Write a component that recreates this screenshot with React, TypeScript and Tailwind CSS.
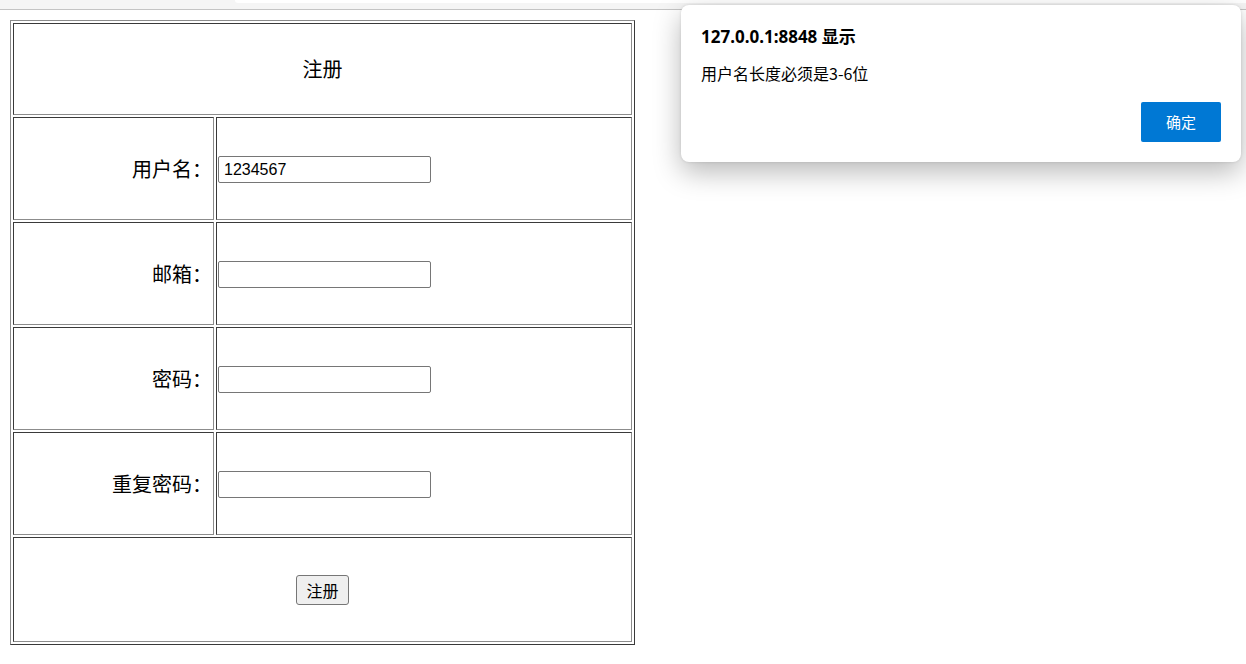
import React from "react";

const cjk = "font-['Noto_Sans_CJK_SC','Noto_Sans',sans-serif]";

function Cell({ className = "", children }: { className?: string; children?: React.ReactNode }) {
  return (
    <div
      className={
        "border border-solid border-t-[#3a3a3a] border-l-[#3a3a3a] border-b-[#8c8c8c] border-r-[#8c8c8c] p-[1px] " +
        className
      }
    >
      {children}
    </div>
  );
}

function FieldRow({ label, value }: { label: string; value?: string }) {
  return (
    <div className="flex h-[103px] gap-[2px]">
      <Cell className="flex w-[201px] items-center justify-end">
        <span className={`${cjk} text-[20px] leading-none text-black`}>{label}</span>
      </Cell>
      <Cell className="flex flex-1 items-center pt-[3px]">
        <input
          type="text"
          defaultValue={value}
          readOnly
          className="h-[27px] w-[213px] rounded-[2px] border border-solid border-[#767676] bg-white pl-[5px] font-['Liberation_Sans',Arial,sans-serif] text-[16px] text-black outline-none"
        />
      </Cell>
    </div>
  );
}

export default function App() {
  return (
    <div className="relative h-[664px] w-[1246px] overflow-hidden bg-white">
      {/* browser top strip */}
      <div className="flex h-[10px] items-start border-b border-solid border-[#c4c4c4] bg-[#f5f5f5]">
        <div className="w-[235px]" />
        <div className="h-[3px] flex-1 rounded-bl-[4px] bg-white" />
      </div>

      {/* form table */}
      <div className="ml-[10px] mt-[10px] flex h-[625px] w-[625px] flex-col gap-[2px] border border-solid border-t-[#8c8c8c] border-l-[#8c8c8c] border-b-[#3a3a3a] border-r-[#3a3a3a] p-[2px]">
        <Cell className="flex h-[92px] items-center justify-center">
          <span className={`${cjk} text-[20px] leading-none text-black`}>注册</span>
        </Cell>
        <FieldRow label="用户名：" value="1234567" />
        <FieldRow label="邮箱：" />
        <FieldRow label="密码：" />
        <FieldRow label="重复密码：" />
        <Cell className="flex h-[105px] items-center justify-center">
          <button
            type="button"
            className={`${cjk} h-[30px] w-[53px] rounded-[3px] border border-solid border-[#767676] bg-[#efefef] text-[16px] leading-none text-black`}
          >
            注册
          </button>
        </Cell>
      </div>

      {/* alert dialog */}
      <div className="absolute left-[681px] top-[5px] flex h-[157px] w-[560px] flex-col rounded-[8px] bg-white px-[20px] pt-[21px] shadow-[0_10px_28px_rgba(0,0,0,0.28),0_0_3px_rgba(0,0,0,0.12)]">
        <div className="font-['Noto_Sans','Noto_Sans_CJK_SC',sans-serif] text-[17px] font-bold leading-[22px] text-black">
          127.0.0.1:8848 显示
        </div>
        <div className="mt-[15px] font-['Noto_Sans_CJK_SC','Noto_Sans',sans-serif] text-[16px] leading-[20px] text-black">
          用户名长度必须是3-6位
        </div>
        <div className="mt-auto mb-[20px] flex justify-end">
          <button
            type="button"
            className={`${cjk} h-[40px] w-[80px] rounded-[2px] bg-[#0078d4] text-[15px] text-white`}
          >
            确定
          </button>
        </div>
      </div>
    </div>
  );
}
